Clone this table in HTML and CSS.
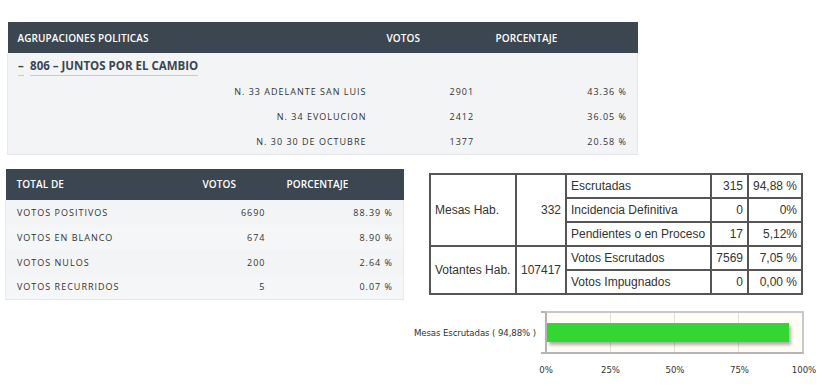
FILE: index.html
```html
<!DOCTYPE html>
<html lang="es">
<head>
<meta charset="utf-8">
<title>Resultados</title>
<link rel="stylesheet" href="styles.css">
</head>
<body>
<div class="page">
  <table class="grid grid-top">
    <colgroup><col class="c1"><col class="c2"><col class="c3"></colgroup>
    <thead>
      <tr><th>AGRUPACIONES POLITICAS</th><th>VOTOS</th><th>PORCENTAJE</th></tr>
    </thead>
    <tbody>
      <tr class="group-row">
        <td colspan="3"><a class="lnk">–</a> <a class="lnk">806 – JUNTOS POR EL CAMBIO</a></td>
      </tr>
      <tr class="sub"><td class="name">N. 33 ADELANTE SAN LUIS</td><td class="votes">2901</td><td class="pct">43.36 %</td></tr>
      <tr class="sub"><td class="name">N. 34 EVOLUCION</td><td class="votes">2412</td><td class="pct">36.05 %</td></tr>
      <tr class="sub"><td class="name">N. 30 30 DE OCTUBRE</td><td class="votes">1377</td><td class="pct">20.58 %</td></tr>
    </tbody>
  </table>

  <div class="second">
    <table class="grid grid-totals">
      <colgroup><col class="t1"><col class="t2"><col class="t3"></colgroup>
      <thead>
        <tr><th>TOTAL DE</th><th>VOTOS</th><th>PORCENTAJE</th></tr>
      </thead>
      <tbody>
        <tr><td>VOTOS POSITIVOS</td><td class="num">6690</td><td class="pct">88.39 %</td></tr>
        <tr class="alt"><td>VOTOS EN BLANCO</td><td class="num">674</td><td class="pct">8.90 %</td></tr>
        <tr><td>VOTOS NULOS</td><td class="num">200</td><td class="pct">2.64 %</td></tr>
        <tr class="alt"><td>VOTOS RECURRIDOS</td><td class="num">5</td><td class="pct">0.07 %</td></tr>
      </tbody>
    </table>

    <table class="mesas">
      <colgroup><col class="m1"><col class="m2"><col class="m3"><col class="m4"><col class="m5"></colgroup>
      <tr><td rowspan="3">Mesas Hab.</td><td rowspan="3" class="r">332</td><td>Escrutadas</td><td class="r">315</td><td class="r">94,88 %</td></tr>
      <tr><td>Incidencia Definitiva</td><td class="r">0</td><td class="r">0%</td></tr>
      <tr><td>Pendientes o en Proceso</td><td class="r">17</td><td class="r">5,12%</td></tr>
      <tr><td rowspan="2">Votantes Hab.</td><td rowspan="2" class="r">107417</td><td>Votos Escrutados</td><td class="r">7569</td><td class="r">7,05 %</td></tr>
      <tr><td>Votos Impugnados</td><td class="r">0</td><td class="r">0,00 %</td></tr>
    </table>
  </div>

  <div class="chart">
    <div class="chart-row">
      <div class="chart-label">Mesas Escrutadas ( 94,88% )</div>
      <div class="plot">
        <div class="gridlines"><span></span><span></span><span></span><span></span></div>
        <div class="bar" style="width:94.88%"></div>
      </div>
    </div>
    <div class="axis">
      <span>0%</span><span>25%</span><span>50%</span><span>75%</span><span>100%</span>
    </div>
  </div>
</div>
</body>
</html>
```

FILE: styles.css
```css
* { box-sizing: border-box; }
html, body { margin: 0; padding: 0; background: #fff; }
body { width: 820px; height: 392px; overflow: hidden; }

.page { padding-top: 22px; }

.grid {
  border-collapse: collapse;
  font-family: "Open Sans", "DejaVu Sans", sans-serif;
  table-layout: fixed;
}
.grid th {
  background: #3b4651;
  color: #fff;
  font-size: 10px;
  font-weight: 600;
  text-align: left;
  height: 31px;
  padding: 0 0 0 10px;
  letter-spacing: 0.1px;
}
.grid td {
  background: #f3f4f6;
  color: #333;
  font-size: 9px;
  letter-spacing: 1px;
  height: 25px;
  padding: 0;
}
.grid tbody tr:last-child td { border-bottom: 1px solid #e3e5e8; }
.grid tbody td:first-child { border-left: 1px solid #e8e9ec; }
.grid tbody td:last-child { border-right: 1px solid #e8e9ec; }

.grid-top { margin-left: 7px; width: 630px; }
.grid-top .c1 { width: 369px; }
.grid-top .c2 { width: 109px; }
.grid-top .c3 { width: 152px; }

.group-row td { height: 26px; padding-left: 10px; letter-spacing: 0; padding-bottom: 2px; }
.lnk {
  color: #3b4651;
  font-weight: 700;
  font-size: 11.5px;
  text-decoration: none;
  border-bottom: 1px solid #c8cacd;
  padding-bottom: 2px;
}
.lnk + .lnk { margin-left: 4px; }

.sub .name { text-align: right; padding-right: 10px; }
.sub .votes { padding-left: 73px; }
.sub .pct { text-align: right; padding-right: 10px; }

.second {
  display: flex;
  align-items: flex-start;
  margin-top: 14px;
}

.grid-totals { margin-left: 5px; width: 398px; }
.grid-totals .t1 { width: 187px; }
.grid-totals .t2 { width: 84px; }
.grid-totals .t3 { width: 127px; }
.grid-totals th:first-child { padding-left: 11px; }
.grid-totals td:first-child { padding-left: 11px; }
.grid-totals .num { text-align: right; padding-right: 11px; }
.grid-totals .pct { text-align: right; padding-right: 10px; }
.grid-totals tr.alt td { background: #f5f6f8; }

.mesas {
  margin-left: 25px;
  margin-top: 4px;
  width: 372px;
  border-collapse: separate;
  border-spacing: 0;
  border: 1px solid #555;
  table-layout: fixed;
  font-family: "Liberation Sans", Arial, sans-serif;
  font-size: 12px;
  color: #333;
}
.mesas td {
  border: 1px solid #555;
  height: 24px;
  padding: 0 4px;
  white-space: nowrap;
}
.mesas .r { text-align: right; }
.mesas .m1 { width: 86px; }
.mesas .m2 { width: 50px; }
.mesas .m3 { width: 145px; }
.mesas .m4 { width: 37px; }
.mesas .m5 { width: 54px; }

.chart {
  margin-top: 11px;
  font-family: "DejaVu Sans", Tahoma, sans-serif;
  font-size: 8.6px;
  color: #333;
}
.chart-row { display: flex; align-items: center; }
.chart-label {
  width: 536px;
  text-align: right;
  letter-spacing: -0.1px;
  padding-top: 1px;
}
.plot {
  position: relative;
  margin-left: 9px;
  width: 259px;
  height: 43px;
  background: #fffdf6;
  border: 2px solid #b4b4b4;
  border-right-color: #c8c8c8;
  border-top-color: #c8c8c8;
}
.plot::before, .plot::after {
  content: "";
  position: absolute;
  left: -6px;
  width: 4px;
  height: 2px;
  background: #b4b4b4;
}
.plot::before { top: -2px; }
.plot::after { bottom: -2px; }
.gridlines {
  position: absolute;
  inset: 0;
  display: flex;
}
.gridlines span {
  flex: 1;
  border-right: 1px solid #e2e0da;
}
.gridlines span:last-child { border-right: none; }
.bar {
  position: relative;
  margin-top: 10px;
  height: 19px;
  background: #33d633;
  box-shadow: 2px 3px 3px rgba(0,0,0,0.3);
}
.axis {
  display: flex;
  justify-content: space-between;
  margin-left: 526px;
  width: 298px;
  margin-top: 11px;
}
.axis span { width: 40px; text-align: center; }
```
